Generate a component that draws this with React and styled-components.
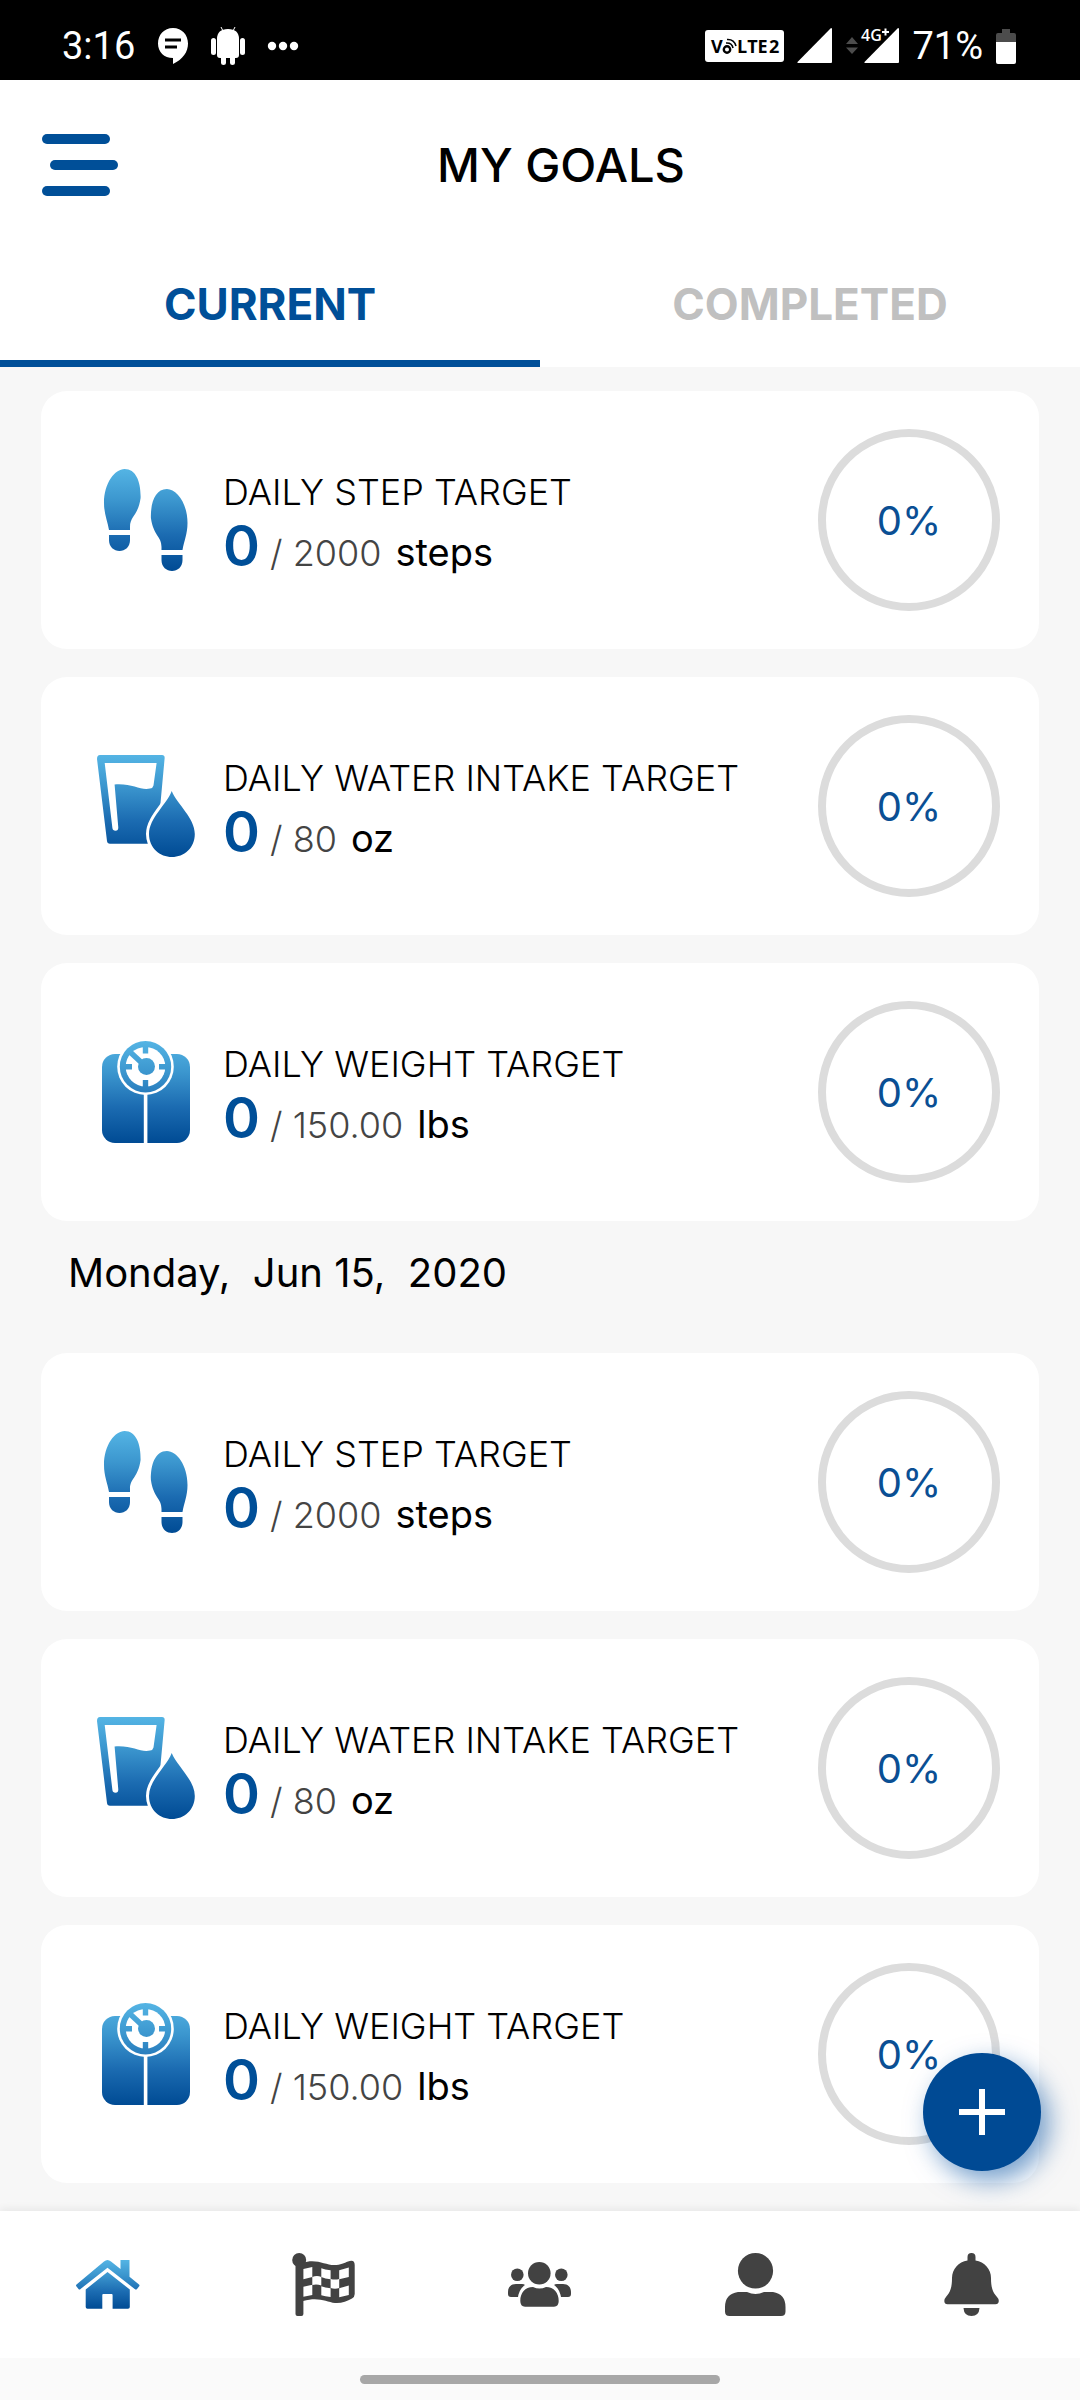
import React, { useState } from 'react';
import styled, { createGlobalStyle } from 'styled-components';

const GlobalStyle = createGlobalStyle`
  * {
    box-sizing: border-box;
  }

  body {
    margin: 0;
    background: #f7f7f7;
    color: #000;
    font-family: Inter, "Open Sans", sans-serif;
  }
`;

const Page = styled.div`
  min-height: 100vh;
  display: flex;
  flex-direction: column;
`;

const StatusBar = styled.div`
  height: 80px;
  padding: 12px 64px 0 62px;
  display: flex;
  justify-content: space-between;
  align-items: center;
  background: #000;
  color: #fff;
  font-family: Roboto, sans-serif;
  font-size: 38px;
  line-height: 40px;
`;

const StatusGroup = styled.div`
  display: flex;
  align-items: center;
  gap: ${props => props.$gap}px;

  svg {
    display: block;
  }
`;

const Header = styled.header`
  display: grid;
  align-items: center;
  height: 170px;
  padding-left: 42px;
  background: #fff;
`;

const MenuButton = styled.button`
  grid-area: 1 / 1;
  justify-self: start;
  display: flex;
  flex-direction: column;
  gap: 16px;
  width: 76px;
  padding: 0;
  border: 0;
  background: none;
  z-index: 1;

  span {
    width: 68px;
    height: 10px;
    border-radius: 5px;
    background: #004f98;
  }

  span:nth-child(2) {
    align-self: flex-end;
  }
`;

const Title = styled.h1`
  grid-area: 1 / 1;
  margin: 0;
  text-align: center;
  font-size: 47px;
  line-height: 56px;
  font-weight: 500;
`;

const Tabs = styled.div`
  display: grid;
  grid-template-columns: 1fr 1fr;
  background: #fff;
`;

const Tab = styled.button`
  height: 117px;
  padding: 0 0 2px;
  border: 0;
  border-bottom: 7px solid ${props => (props.$active ? '#004f98' : 'transparent')};
  background: none;
  color: ${props => (props.$active ? '#004f98' : '#c0c0c0')};
  font-family: inherit;
  font-size: 44px;
  line-height: 52px;
  font-weight: 700;
`;

const Content = styled.main`
  flex: 1;
  padding: 24px 41px 28px;
`;

const GoalList = styled.section`
  display: flex;
  flex-direction: column;
  gap: 28px;
`;

const DateHeading = styled.h2`
  margin: 28px 27px 56px;
  font-size: 40px;
  line-height: 48px;
  font-weight: 400;
  white-space: pre-wrap;
`;

const Card = styled.article`
  display: flex;
  align-items: center;
  padding: 38px 39px 38px 56px;
  border-radius: 26px;
  background: #fff;
`;

const GoalIcon = styled.svg`
  flex: none;
  width: 98px;
  height: 102px;
`;

const GoalText = styled.div`
  flex: 1;
  padding: 14px 0 0 28px;

  h3 {
    margin: 0 0 4px;
    font-size: 36px;
    line-height: 40px;
    font-weight: 300;
    white-space: nowrap;
  }

  p {
    display: flex;
    align-items: baseline;
    margin: 0;
    line-height: 60px;
  }
`;

const Current = styled.strong`
  margin-right: 10px;
  font-size: 56px;
  font-weight: 600;
  color: #004f98;
`;

const Target = styled.span`
  margin-right: 14px;
  font-size: 36px;
  font-weight: 300;
  color: #444;
`;

const Unit = styled.span`
  font-size: 38px;
`;

const Ring = styled.div`
  flex: none;
  display: flex;
  align-items: center;
  justify-content: center;
  width: 182px;
  height: 182px;
  border: 8px solid #dcdcdc;
  border-radius: 50%;
  color: #0a4f94;
  font-size: 40px;
`;

const AddButton = styled.button`
  position: fixed;
  right: 39px;
  bottom: 229px;
  display: flex;
  align-items: center;
  justify-content: center;
  width: 118px;
  height: 118px;
  padding: 0;
  border: 0;
  border-radius: 50%;
  background: #004a94;
  box-shadow: 8px 10px 26px rgba(0, 79, 160, 0.55);
`;

const BottomNav = styled.nav`
  position: relative;
  display: grid;
  grid-template-columns: repeat(5, 1fr);
  height: 147px;
  background: #fff;
  box-shadow: 0 -2px 8px rgba(0, 0, 0, 0.07);
`;

const NavLink = styled.a`
  display: flex;
  align-items: center;
  justify-content: center;
  color: #424242;

  svg {
    width: 64px;
    height: 64px;
  }
`;

const GestureBar = styled.div`
  display: flex;
  justify-content: center;
  height: 42px;
  padding-top: 17px;
  background: #fafafa;
  z-index: 1;

  span {
    width: 33.33%;
    height: 9px;
    border-radius: 5px;
    background: #a7a7a7;
  }
`;

const Gradient = ({ id, from, to }) => (
  <linearGradient id={id} gradientUnits="userSpaceOnUse" x1="0" y1={from} x2="0" y2={to}>
    <stop offset="0" stopColor="#54b4e4" />
    <stop offset="0.3" stopColor="#3c97cf" />
    <stop offset="0.65" stopColor="#1b6bb1" />
    <stop offset="1" stopColor="#004b94" />
  </linearGradient>
);

const Foot = () => (
  <>
    <path d="M27.6 0C18 0 7 14 7 34C7 45 10.5 52 12 61H33V58C33 47 41 47 43.6 29C44 13 39 0 27.6 0Z" />
    <path d="M12 66H33V71C33 78 28 82 22.5 82S12 78 12 71Z" />
  </>
);

const StepsIcon = ({ id }) => (
  <GoalIcon viewBox="0 0 98 102" aria-hidden="true">
    <defs>
      <Gradient id={id} from="0" to="102" />
      <Gradient id={`${id}-low`} from="-20" to="82" />
    </defs>
    <g fill={`url(#${id})`}>
      <Foot />
    </g>
    <g fill={`url(#${id}-low)`} transform="translate(97.5 20) scale(-1 1)">
      <Foot />
    </g>
  </GoalIcon>
);

const WaterIcon = ({ id }) => (
  <GoalIcon viewBox="0 0 98 102" aria-hidden="true">
    <defs>
      <Gradient id={id} from="0" to="102" />
    </defs>
    <path
      fill={`url(#${id})`}
      d="M3 0H65Q68 0 67.6 3.5L60 86Q59.6 88.7 57 88.7H13Q10.3 88.7 10 86L0 4Q0 0 3 0Z"
    />
    <path
      fill="#fff"
      d="M7.7 8H59.6L56.5 30.5Q56 33 53 33.5C44 36 35 28 17.6 29.5L21.3 72.5Q21.3 75.7 18.5 75.7T15.4 73Z"
    />
    <path
      fill={`url(#${id})`}
      stroke="#fff"
      strokeWidth="6"
      paintOrder="stroke"
      d="M74.7 36C80 49 97.8 63 97.8 79C97.8 93 87 102 75 102S52 93 52 79C52 63 70 49 74.7 36Z"
    />
  </GoalIcon>
);

const ScaleIcon = ({ id }) => (
  <GoalIcon viewBox="0 0 98 102" aria-hidden="true">
    <defs>
      <Gradient id={id} from="0" to="102" />
    </defs>
    <rect fill={`url(#${id})`} x="5" y="13" width="88" height="89" rx="13" />
    <path fill="#fff" d="M24 12H73V26H24ZM46.8 50H50.4V102H46.8Z" />
    <circle cx="48.5" cy="25.7" r="28.3" fill="#fff" />
    <circle cx="48.5" cy="25.7" r="25.7" fill={`url(#${id})`} />
    <circle cx="48.5" cy="25.7" r="19.8" fill="#fff" />
    <path
      fill={`url(#${id})`}
      d="M45.8 5H51.2V12.5H45.8ZM45.8 39H51.2V47H45.8ZM28 23H35V28.4H28ZM62 23H69V28.4H62Z"
    />
    <path fill="none" stroke={`url(#${id})`} strokeWidth="5.5" d="M32 10L46 23" />
    <circle cx="49.5" cy="25.5" r="8.5" fill={`url(#${id})`} />
  </GoalIcon>
);

const HomeIcon = () => (
  <svg viewBox="0 0 64 64" fill="url(#nav-home)">
    <defs>
      <Gradient id="nav-home" from="7" to="56" />
    </defs>
    <path d="M.5 31.5L28 8.5Q31.5 5.5 35 8.5L44.5 16V7H53.5V23.7L63 31.5Q64 32.5 63 33.5L61 36Q60 37.2 58.7 36L31.5 14.7L4.5 36Q3.5 37.2 2.5 36L.5 33.5Q-.5 32.5 .5 31.5Z" />
    <path d="M31.5 19L53.8 36.5V54Q53.8 55.7 52 55.7H36.6V42Q36.6 41 35.6 41H27.3Q26.3 41 26.3 42V55.7H11.5Q9.7 55.7 9.7 54V36.5Z" />
  </svg>
);

const FlagIcon = () => (
  <svg viewBox="0 0 64 64" fill="currentColor">
    <circle cx="7.2" cy="7" r="7" />
    <path d="M3.5 8H11.4V61Q11.4 63 9.4 63H5.5Q3.5 63 3.5 61Z" />
    <path d="M10 10C24 5 33 12 42 12C49 12 52 10 56 8.5Q62.7 6 62.7 12V41Q62.7 44 60 45.5C55 48.5 49 50.5 43 50C34 49 27 43.5 11 48Z" />
    <path
      fill="#fff"
      d="M11.4 16L20.3 14V24L11.4 26.3ZM11.4 33.7L20.3 31.7V42L11.4 43.7ZM20.3 24Q25 22 29.3 24V32.5Q25 31 20.3 32ZM29.3 15.3Q33 17 38.6 17.3V26.3Q33 26 29.3 24ZM29.3 33.3Q33 35 38.6 35.3V44Q33 43.5 29.3 42.3ZM38.6 26Q43 27 47.2 26V35Q43 36.5 38.6 35ZM47.2 17.3L56.8 14.5V24L47.2 26.3ZM47.2 35.3L56.8 32.5V42L47.2 44.3Z"
    />
  </svg>
);

const GroupIcon = () => (
  <svg viewBox="0 0 64 64" fill="currentColor">
    <circle cx="9.3" cy="21.7" r="6.3" />
    <circle cx="53.3" cy="21.7" r="6.3" />
    <circle cx="31.3" cy="20.3" r="11.3" />
    <path d="M17 32C14 34 11 38 10 44H3Q0 44 0 41V39C0 34 3 31 8 31H14Q16 31 17 32Z" />
    <path d="M46 32C49 34 52 38 53 44H60Q63 44 63 41V39C63 34 60 31 55 31H49Q47 31 46 32Z" />
    <path d="M25 34Q31.5 37 38 34C46 34 50.7 40 50.7 48Q50.7 53.7 46 53.7H17Q12.3 53.7 12.3 48C12.3 40 17 34 25 34Z" />
  </svg>
);

const PersonIcon = () => (
  <svg viewBox="0 0 64 64" fill="currentColor">
    <ellipse cx="31.5" cy="17.8" rx="17.6" ry="17.8" />
    <path d="M14 39H23Q31.5 43 40 39H49Q61.5 41 61.5 54V58.5Q61.5 63 57 63H5.5Q1 63 1 58.5V54Q1 41 14 39Z" />
  </svg>
);

const BellIcon = () => (
  <svg viewBox="0 0 64 64" fill="currentColor">
    <path d="M27.5 7.500V4Q27.5 0 31.500 0T35.500 4V7.500C44.500 9 51 16 51 25C51 34 52.500 39 57 44Q59 46 58.800 48Q58.500 51.300 55.500 51.300H7.500Q4.500 51.300 4.300 48Q4.100 46 6 44C10.500 39 12 34 12 25C12 16 18.500 9 27.500 7.500Z" />
    <path d="M23.5 55H39.5Q39 63 31.5 63T23.5 55Z" />
  </svg>
);

const ChatIcon = () => (
  <svg width="32" height="36" viewBox="0 0 32 36">
    <path fill="#fff" d="M16 0C7 0 1 7 1 15.500S7 30 16 30V36C26 31 31 24 31 15.500S25 0 16 0Z" />
    <path stroke="#000" strokeWidth="3" d="M8 12H24M8 19H20" />
  </svg>
);

const AndroidIcon = () => (
  <svg width="34" height="38" viewBox="0 0 34 38" fill="#fff">
    <path stroke="#fff" d="M10 0L12 4M24 0L22 4" />
    <path d="M6 12Q6 2 17 2T28 12V28Q28 31 25 31H24V36Q24 38 21.500 38T19 36V31H15V36Q15 38 12.500 38T10 36V31H9Q6 31 6 28Z" />
    <rect x="0" y="11" width="5" height="17" rx="2.5" />
    <rect x="29" y="11" width="5" height="17" rx="2.5" />
  </svg>
);

const DotsIcon = () => (
  <svg width="32" height="10" viewBox="0 0 32 10" fill="#fff">
    <circle cx="5" cy="5" r="4.2" />
    <circle cx="16" cy="5" r="4.2" />
    <circle cx="27" cy="5" r="4.2" />
  </svg>
);

const VolteIcon = () => (
  <svg width="79" height="32" viewBox="0 0 79 32">
    <rect width="79" height="32" rx="3" fill="#fff" />
    <g fontFamily="Open Sans" fontWeight="700" fontSize="18">
      <text x="6" y="23">V</text>
      <text x="32" y="23">LTE</text>
      <text x="64" y="23">2</text>
    </g>
    <g fill="none" stroke="#000">
      <circle cx="22" cy="19.5" r="3.2" strokeWidth="2.4" />
      <path strokeWidth="1.6" d="M21 13Q27 12.500 28 18M22 9.500Q29 9 31 16" />
    </g>
  </svg>
);

const SignalIcon = () => (
  <svg width="35" height="36" viewBox="0 0 35 36">
    <path fill="#fff" d="M34 0Q35 0 35 1V34Q35 35 34 35H1Q0 35 .5 34Z" />
  </svg>
);

const DataSignalIcon = () => (
  <svg width="54" height="56" viewBox="0 -10 54 56">
    <path fill="#4c4c4c" d="M1 16L7 9L13 16ZM1 19.500H13L7 26Z" />
    <path fill="#fff" d="M53 0Q54 0 54 1V34Q54 35 53 35H20Q19 35 19.500 34Z" />
    <path stroke="#fff" strokeWidth="2" d="M37 4H44M40.500 .5V7.500" />
    <text x="16" y="13" fill="#fff" fontFamily="Open Sans" fontWeight="600" fontSize="16">
      4G
    </text>
  </svg>
);

const BatteryIcon = () => (
  <svg width="20" height="35" viewBox="0 0 20 35">
    <path fill="#4c4c4c" d="M6 0H14V4H18Q20 4 20 6V14H0V6Q0 4 2 4H6Z" />
    <path fill="#fff" d="M0 13H20V33Q20 35 18 35H2Q0 35 0 33Z" />
  </svg>
);

const goals = [
  { key: 'steps', icon: StepsIcon, label: 'DAILY STEP TARGET', target: '2000', unit: 'steps' },
  { key: 'water', icon: WaterIcon, label: 'DAILY WATER INTAKE TARGET', target: '80', unit: 'oz' },
  { key: 'weight', icon: ScaleIcon, label: 'DAILY WEIGHT TARGET', target: '150.00', unit: 'lbs' }
];

const navItems = [
  { key: 'Home', icon: HomeIcon },
  { key: 'Goals', icon: FlagIcon },
  { key: 'Groups', icon: GroupIcon },
  { key: 'Profile', icon: PersonIcon },
  { key: 'Notifications', icon: BellIcon }
];

const Goals = ({ prefix }) => (
  <GoalList>
    {goals.map(({ key, icon: Icon, label, target, unit }) => (
      <Card key={key}>
        <Icon id={`${prefix}-${key}`} />
        <GoalText>
          <h3>{label}</h3>
          <p>
            <Current>0</Current>
            <Target>/ {target}</Target>
            <Unit>{unit}</Unit>
          </p>
        </GoalText>
        <Ring>0%</Ring>
      </Card>
    ))}
  </GoalList>
);

const App = () => {
  const [tab, setTab] = useState('CURRENT');

  return (
    <Page>
      <GlobalStyle />
      <StatusBar>
        <StatusGroup $gap={22}>
          <span>3:16</span>
          <ChatIcon />
          <AndroidIcon />
          <DotsIcon />
        </StatusGroup>
        <StatusGroup $gap={13}>
          <VolteIcon />
          <SignalIcon />
          <DataSignalIcon />
          <span>71%</span>
          <BatteryIcon />
        </StatusGroup>
      </StatusBar>
      <Header>
        <MenuButton type="button" aria-label="Menu">
          <span />
          <span />
          <span />
        </MenuButton>
        <Title>MY GOALS</Title>
      </Header>
      <Tabs role="tablist">
        {['CURRENT', 'COMPLETED'].map(name => (
          <Tab
            key={name}
            type="button"
            role="tab"
            aria-selected={tab === name}
            $active={tab === name}
            onClick={() => setTab(name)}
          >
            {name}
          </Tab>
        ))}
      </Tabs>
      <Content>
        <Goals prefix="today" />
        <DateHeading>{'Monday,  Jun 15,  2020'}</DateHeading>
        <Goals prefix="monday" />
      </Content>
      <AddButton type="button" aria-label="Add goal">
        <svg width="48" height="48" viewBox="0 0 48 48">
          <path stroke="#fff" strokeWidth="6" d="M24 1V47M1 24H47" />
        </svg>
      </AddButton>
      <BottomNav>
        {navItems.map(({ key, icon: Icon }) => (
          <NavLink key={key} href={`#${key.toLowerCase()}`} aria-label={key}>
            <Icon />
          </NavLink>
        ))}
      </BottomNav>
      <GestureBar>
        <span />
      </GestureBar>
    </Page>
  );
};

export default App;
